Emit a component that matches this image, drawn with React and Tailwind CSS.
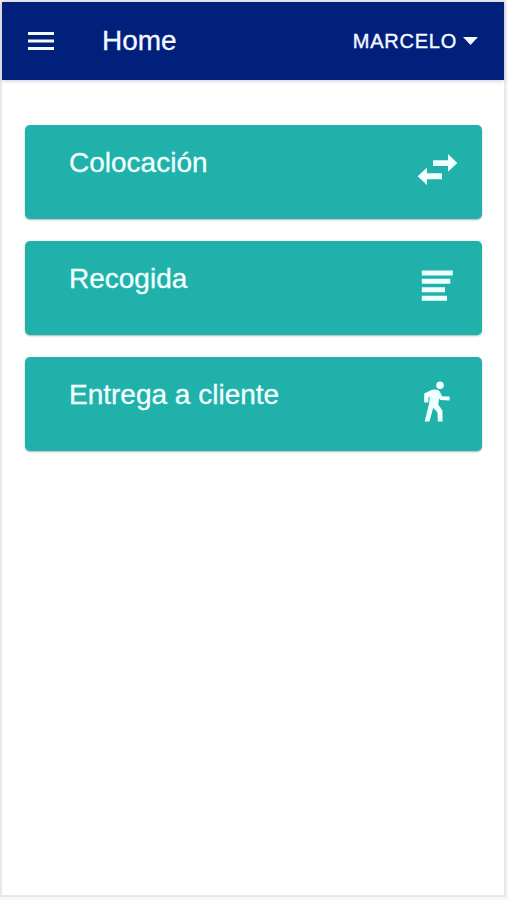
import React from "react";

function SwapIcon() {
  return (
    <svg viewBox="0 0 46 46" fill="currentColor" className="size-[46px]" aria-hidden="true">
      <path d="M19 13.3h15V7l9.3 9-9.3 8.7V19H19zM28 26.3H13V20.6L3.6 29.2 13 38v-5.8h15z" />
    </svg>
  );
}

function SubjectIcon() {
  return (
    <svg viewBox="0 0 46 46" fill="currentColor" className="size-[46px]" aria-hidden="true">
      <path d="M7.8 7.4h31v5h-31zM7.8 15.8h28.5v5H7.8zM7.8 24.2H31v5H7.8zM7.8 32.8h25.2v5H7.8z" />
    </svg>
  );
}

function WalkIcon() {
  return (
    <svg viewBox="0 0 46 46" fill="currentColor" className="size-[46px]" aria-hidden="true">
      <circle cx="26" cy="6.2" r="3.8" />
      <path d="M18 10.8c4-.8 7-.4 8.2 2.4l1.8 4 7.7.4v3.8l-9.3-.4-1.2-1.4-1 6 4.2 6 .2 10.9h-4.7l-.5-9.2-4.2-4.6-3.7 13.8h-4.8l4.4-17.9.6-6.8-1.3.6v5.2h-4.2v-9.2z" />
    </svg>
  );
}

function Card({ label, children }) {
  return (
    <button className="flex h-[94px] w-full shrink-0 items-start justify-between rounded-[5px] bg-[#20b2aa] pl-11 pr-[22px] pt-[22px] text-left text-[#f0ffff] shadow-[0_1px_2px_rgba(0,0,0,0.3)]">
      <span className="text-[28px] leading-8 [-webkit-text-stroke:0.3px_currentColor]">{label}</span>
      {children}
    </button>
  );
}

export default function App() {
  return (
    <div className="h-[900px] w-[508px] bg-[#f7f7f7] pr-[2px] pb-[3px] font-['Liberation_Sans',Arial,sans-serif]">
      <div className="flex h-full flex-col border-2 border-[#e9e9e9] bg-white">
        <header className="flex h-[78px] shrink-0 items-center bg-[#00207c] pl-[26px] pr-[26px] text-[#f4f8ff] shadow-[0_1px_4px_rgba(0,0,100,0.2)]">
          <svg viewBox="0 0 26 18" fill="currentColor" className="h-[18px] w-[26px]" aria-hidden="true">
            <path d="M0 0h26v3H0zM0 7.5h26v3H0zM0 15h26v3H0z" />
          </svg>
          <h1 className="ml-12 text-[28px] leading-8 [-webkit-text-stroke:0.3px_currentColor]">Home</h1>
          <button className="ml-auto flex items-center gap-[6px] text-[20px] tracking-[0.75px] [-webkit-text-stroke:0.4px_currentColor]">
            MARCELO
            <svg viewBox="0 0 15 8" fill="currentColor" className="h-2 w-[15px]" aria-hidden="true">
              <path d="M0 0h15L7.5 8z" />
            </svg>
          </button>
        </header>
        <main className="flex flex-col gap-[22px] pl-[23px] pr-[22px] pt-[45px]">
          <Card label="Colocación"><SwapIcon /></Card>
          <Card label="Recogida"><SubjectIcon /></Card>
          <Card label="Entrega a cliente"><WalkIcon /></Card>
        </main>
      </div>
    </div>
  );
}
